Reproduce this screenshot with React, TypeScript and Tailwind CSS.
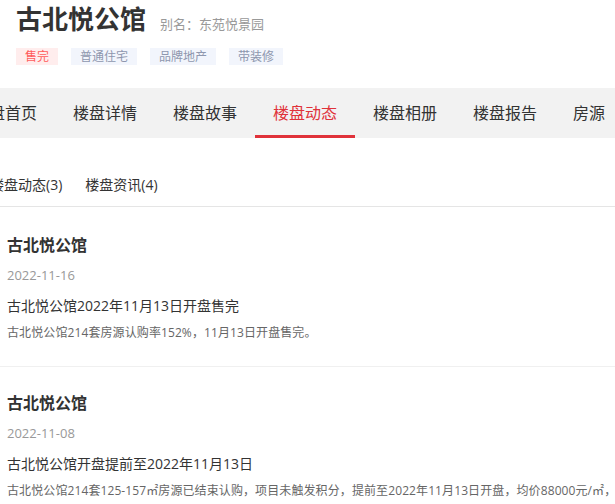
import React from "react";

const font = "font-['Open_Sans','Noto_Sans_CJK_SC',sans-serif]";

const tags = [
  { t: "售完", c: "bg-[#ffeded] text-[#ff5b5b]" },
  { t: "普通住宅", c: "bg-[#f2f5fc] text-[#8e97ae]" },
  { t: "品牌地产", c: "bg-[#f2f5fc] text-[#8e97ae]" },
  { t: "带装修", c: "bg-[#f2f5fc] text-[#8e97ae]" },
];

const nav = ["楼盘首页", "楼盘详情", "楼盘故事", "楼盘动态", "楼盘相册", "楼盘报告", "房源"];

const articles = [
  {
    title: "古北悦公馆",
    date: "2022-11-16",
    head: "古北悦公馆2022年11月13日开盘售完",
    desc: "古北悦公馆214套房源认购率152%，11月13日开盘售完。",
  },
  {
    title: "古北悦公馆",
    date: "2022-11-08",
    head: "古北悦公馆开盘提前至2022年11月13日",
    desc: "古北悦公馆214套125-157㎡房源已结束认购，项目未触发积分，提前至2022年11月13日开盘，均价88000元/㎡，项目将于",
  },
];

export default function App() {
  return (
    <div className={`w-[615px] h-[504px] overflow-hidden bg-white ${font}`}>
      <div className="pl-4 pt-[2px]">
        <div className="flex items-baseline">
          <h1 className="text-[26px] font-bold leading-[34px] text-[#333]">古北悦公馆</h1>
          <span className="ml-[14px] text-[13px] leading-[20px] text-[#999]">别名：东苑悦景园</span>
        </div>
        <div className="mt-[12px] flex gap-[13px]">
          {tags.map((g) => (
            <span key={g.t} className={`h-[17px] px-[9px] text-[12px] leading-[17px] ${g.c}`}>
              {g.t}
            </span>
          ))}
        </div>
      </div>

      <div className="mt-[23px] h-[50px] bg-[#f2f2f2] flex ml-[-45px] whitespace-nowrap">
        {nav.map((n) => {
          const active = n === "楼盘动态";
          return (
            <div
              key={n}
              className={`relative px-[18px] flex items-center text-[16px] ${active ? "text-[#e0323a]" : "text-[#333]"}`}
            >
              {n}
              {active && <div className="absolute left-0 right-0 bottom-0 h-[3px] bg-[#e0323a]" />}
            </div>
          );
        })}
      </div>

      <div className="border-b border-[#e5e5e5] pt-[37px] pb-[11px]">
        <div className="flex gap-[23px] ml-[-10px] text-[14px] leading-[20px] text-[#333] whitespace-nowrap">
          <span>楼盘动态(3)</span>
          <span>楼盘资讯(4)</span>
        </div>
      </div>

      {articles.map((a, i) => (
        <div
          key={i}
          className={`pl-[7px] ${i === 0 ? "pt-[28px] pb-[24px] border-b border-[#f0f0f0]" : "pt-[26px] pb-[24px]"}`}
        >
          <div className="text-[16px] font-bold leading-[20px] text-[#333]">{a.title}</div>
          <div className="mt-[10px] text-[13px] leading-[20px] text-[#999]">{a.date}</div>
          <div className="mt-[11px] text-[14px] leading-[20px] text-[#333]">{a.head}</div>
          <div className="mt-[8px] text-[12px] leading-[18px] text-[#666] whitespace-nowrap tracking-[0.1px]">
            {a.desc}
          </div>
        </div>
      ))}
    </div>
  );
}
